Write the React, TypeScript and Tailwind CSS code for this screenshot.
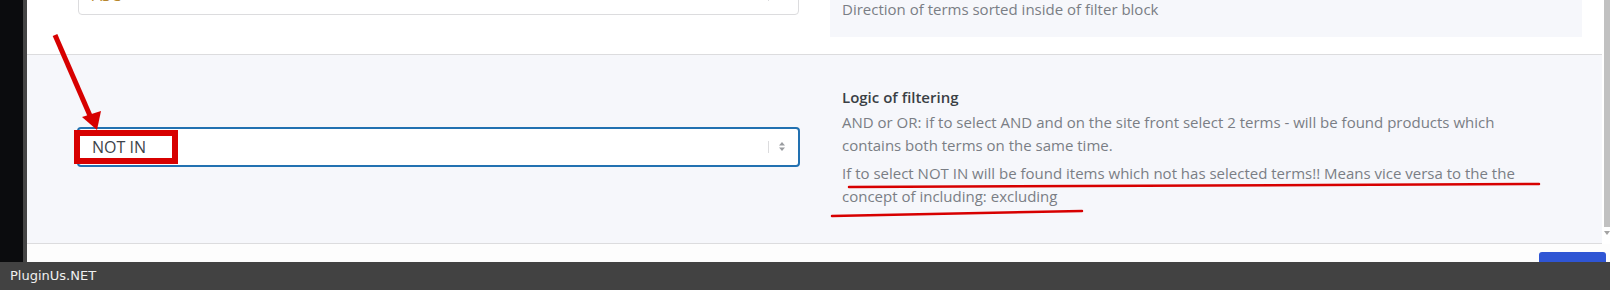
const font = "font-['Open_Sans',_'Noto_Sans',_sans-serif]";

const SelectArrows = () => (
  <div className="flex items-center gap-[9px] pr-[12px]">
    <div className="w-px h-[12px] bg-[#dcdcde]" />
    <svg width="8" height="11" viewBox="0 0 8 11">
      <path d="M4 1 L7 4.5 L1 4.5 Z" fill="#9a9ca0" />
      <path d="M4 10 L7 6.5 L1 6.5 Z" fill="#9a9ca0" />
    </svg>
  </div>
);

const App = () => {
  return (
    <div className={`relative w-[1610px] h-[290px] overflow-hidden bg-white flex flex-col ${font}`}>
      <div className="flex h-[262px]">
        {/* dark window edge */}
        <div className="w-[23px] bg-[#0b0c0e]" />
        <div className="w-[4px] bg-[#454545]" />

        <div className="flex-1 flex flex-col">
          <div className="flex h-[244px]">
            <div className="flex-1 flex flex-col">
              {/* previous option row, cut off at top */}
              <div className="h-[55px] flex items-start pl-[51px] pr-[20px] border-b border-[#dcdcde] bg-white">
                <div className="w-[721px] h-[40px] -mt-[25px] flex items-center justify-between border border-[#dcdcde] rounded-[4px] bg-white">
                  <span className="pl-[13px] text-[16px] text-[#b6862c]">ASC</span>
                  <SelectArrows />
                </div>
                <div className="ml-[31px] flex-1 h-[77px] -mt-[40px] flex flex-col justify-end pb-[16px] pl-[12px] bg-[#f6f7fb]">
                  <p className="text-[15px] leading-[23px] text-[#7a7e85]">
                    Direction of terms sorted inside of filter block
                  </p>
                </div>
              </div>

              {/* logic of filtering row */}
              <div className="flex-1 flex items-center pl-[50px] pr-[20px] pb-[5px] bg-[#f6f7fb] border-b border-[#dcdcde]">
                <div className="w-[723px] h-[40px] flex items-center justify-between border-2 border-[#2271b1] rounded-[4px] bg-white">
                  <span className="pl-[13px] text-[16px] text-[#3c434a]">NOT IN</span>
                  <SelectArrows />
                </div>
                <div className="ml-[30px] flex-1 pl-[12px]">
                  <h3 className="text-[15px] font-semibold leading-[23px] mb-[2px] text-[#3a3f45]">
                    Logic of filtering
                  </h3>
                  <p className="text-[15px] leading-[23px] text-[#7a7e85] whitespace-nowrap">
                    AND or OR: if to select AND and on the site front select 2 terms - will be found products which
                    <br />
                    contains both terms on the same time.
                  </p>
                  <p className="mt-[5px] text-[15px] leading-[23px] text-[#7a7e85] whitespace-nowrap">
                    If to select NOT IN will be found items which not has selected terms!! Means vice versa to the the
                    <br />
                    concept of including: excluding
                  </p>
                </div>
              </div>
            </div>

            {/* scrollbar */}
            <div className="w-[8px] flex flex-col items-end bg-white">
              <div className="w-[6px] h-[227px] bg-[#c1c1c1]" />
              <svg width="6" height="6" viewBox="0 0 6 6" className="mt-[3px]">
                <path d="M0 1 L6 1 L3 5 Z" fill="#a3a3a3" />
              </svg>
            </div>
          </div>

          {/* bottom bar with button */}
          <div className="flex-1 flex justify-end items-end pr-[4px] bg-[#fdfdfd]">
            <div className="w-[67px] h-[10px] bg-[#2f55d4] rounded-t-[3px]" />
          </div>
        </div>
      </div>

      {/* footer */}
      <div className="flex-1 flex items-center pl-[10px] bg-[#424242]">
        <span className="font-['DejaVu_Sans',_sans-serif] text-[13px] text-[#f0f0f0]">PluginUs.NET</span>
      </div>

      {/* red annotations */}
      <svg className="absolute inset-0 pointer-events-none" width="1610" height="290" viewBox="0 0 1610 290">
        <line x1="55" y1="35" x2="91" y2="118" stroke="#d70000" strokeWidth="5" />
        <polygon points="97,130 82,117 101,111" fill="#d70000" />
        <rect x="77" y="133" width="98" height="28" fill="none" stroke="#d70000" strokeWidth="6" />
        <line x1="849" y1="187" x2="1539" y2="184" stroke="#d70000" strokeWidth="2.5" strokeLinecap="round" />
        <line x1="832" y1="216" x2="1082" y2="211" stroke="#d70000" strokeWidth="2.5" strokeLinecap="round" />
      </svg>
    </div>
  );
};

export default App;
